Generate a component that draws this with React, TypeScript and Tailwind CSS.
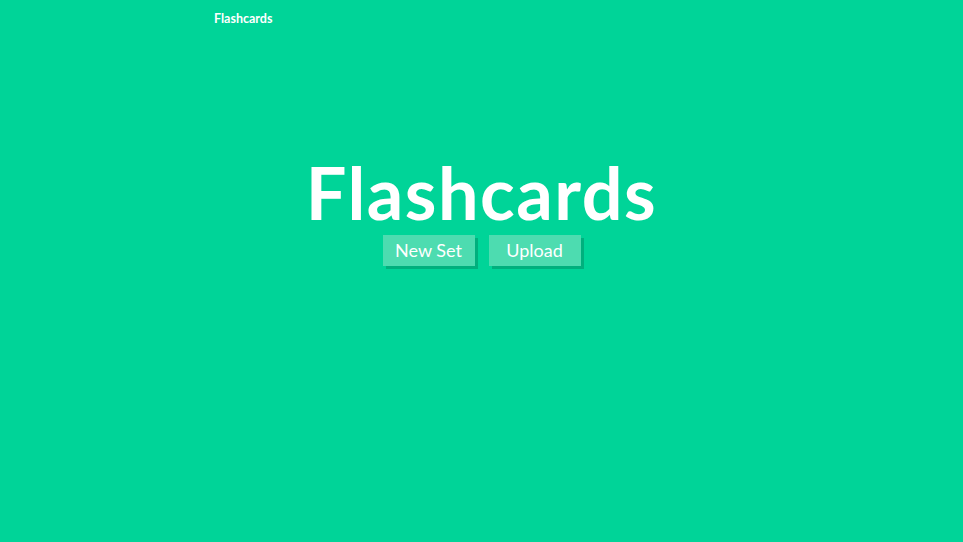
export default function App() {
    return (
        <div className="min-h-[542px] w-full bg-[#00d498] font-['Lato','Open_Sans',sans-serif] text-white">
            {/* Navbar */}
            <nav className="mx-auto w-[535px] pt-[5px]">
                <span className="text-[12.5px] font-bold">Flashcards</span>
            </nav>

            {/* Hero */}
            <main className="flex flex-col items-center pt-[127px]">
                <h1 className="text-[72px] font-bold leading-[72px] tracking-[1.5px]">Flashcards</h1>
                <div className="mt-[7px] flex gap-[14px]">
                    <button className="h-[31px] w-[92px] bg-[#4ddcb0] text-[18px] shadow-[3px_3px_0_#00b07d]">
                        New Set
                    </button>
                    <button className="h-[31px] w-[92px] bg-[#4ddcb0] text-[18px] shadow-[3px_3px_0_#00b07d]">
                        Upload
                    </button>
                </div>
            </main>
        </div>
    );
}
